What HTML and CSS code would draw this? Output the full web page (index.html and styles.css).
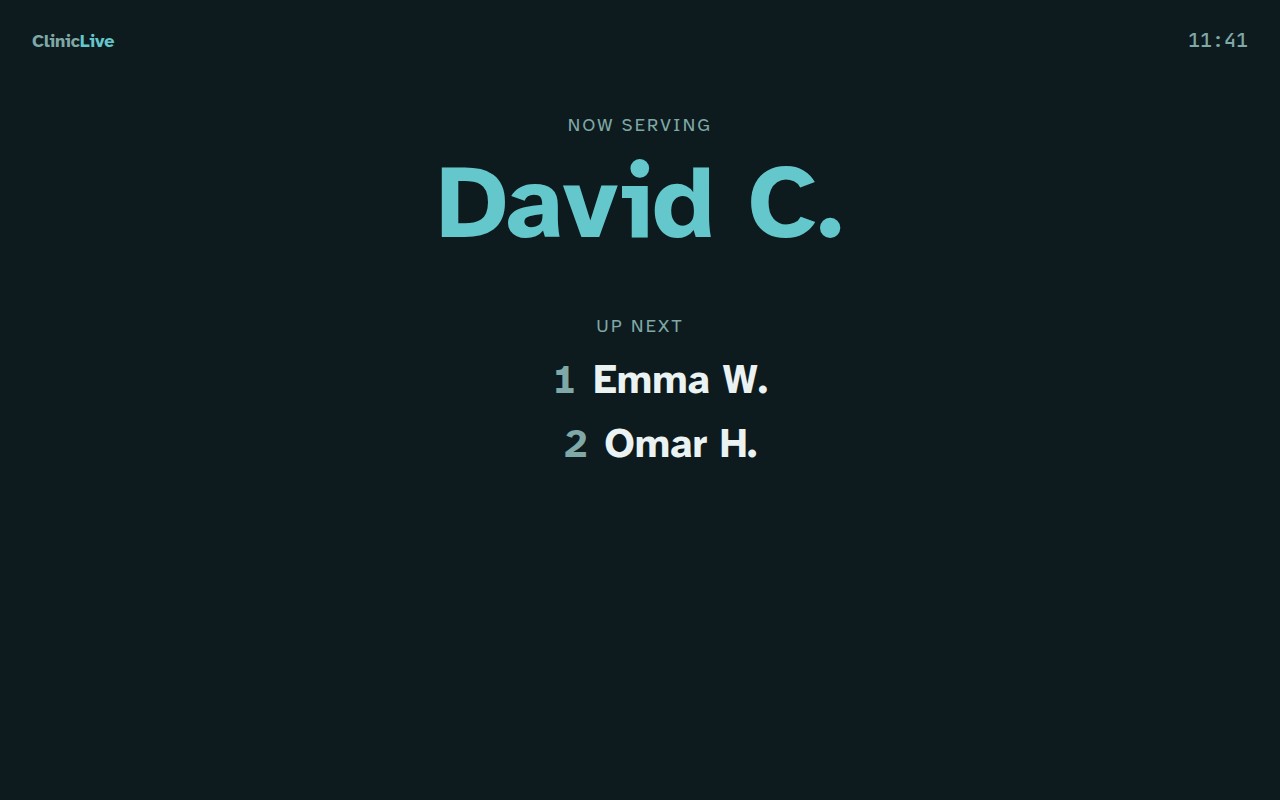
FILE: index.html
```
<!DOCTYPE html>
<html lang="en">
<head>
    <meta charset="UTF-8">
    <meta name="viewport" content="width=device-width, initial-scale=1.0">
    <title>ClinicLive - Waiting Room</title>
    <link rel="stylesheet" href="styles.css">
</head>
<body>
    <header class="topbar">
        <div class="brand">Clinic<span>Live</span></div>
        <time class="clock" datetime="11:41">11:41</time>
    </header>

    <main class="board">
        <section class="serving">
            <h2 class="label">Now serving</h2>
            <p class="current">David C.</p>
        </section>

        <section class="upcoming">
            <h2 class="label">Up next</h2>
            <ol class="queue">
                <li><span class="position">1</span>Emma W.</li>
                <li><span class="position">2</span>Omar H.</li>
            </ol>
        </section>
    </main>
</body>
</html>
```
FILE: styles.css
```
* {
    box-sizing: border-box;
}
body {
    margin: 0;
    min-height: 100vh;
    padding: 24px 32px;
    font-family: "Atkinson Hyperlegible", "Open Sans", sans-serif;
    background-color: #0d1b1e;
    color: #eaf2f2;
}
.topbar {
    display: flex;
    align-items: center;
    justify-content: space-between;
    height: 32px;
}
.brand {
    padding-top: 2px;
    font-size: 18px;
    font-weight: 700;
    color: #7fa8a6;
}
.brand span {
    color: #63c7cc;
}
.clock {
    font-family: "JetBrains Mono", "Liberation Mono", monospace;
    font-size: 20px;
    font-weight: 500;
    color: #7fa8a6;
}
.board {
    padding-top: 56px;
    text-align: center;
}
.label {
    margin: 0;
    font-size: 18px;
    font-weight: 400;
    line-height: 26px;
    letter-spacing: 0.12em;
    text-transform: uppercase;
    color: #7fa8a6;
}
.current {
    margin: 8px 0 0;
    font-size: 104px;
    font-weight: 700;
    line-height: 114px;
    color: #63c7cc;
}
.upcoming {
    margin-top: 53px;
}
.queue {
    margin: 17px 0 0;
    padding: 0 0 0 40px;
    list-style: none;
    font-size: 40px;
    font-weight: 700;
    line-height: 48px;
}
.queue li {
    display: flex;
    justify-content: center;
    gap: 16px;
    margin-bottom: 16px;
}
.position {
    font-variant-numeric: tabular-nums;
    color: #7fa8a6;
}
```
